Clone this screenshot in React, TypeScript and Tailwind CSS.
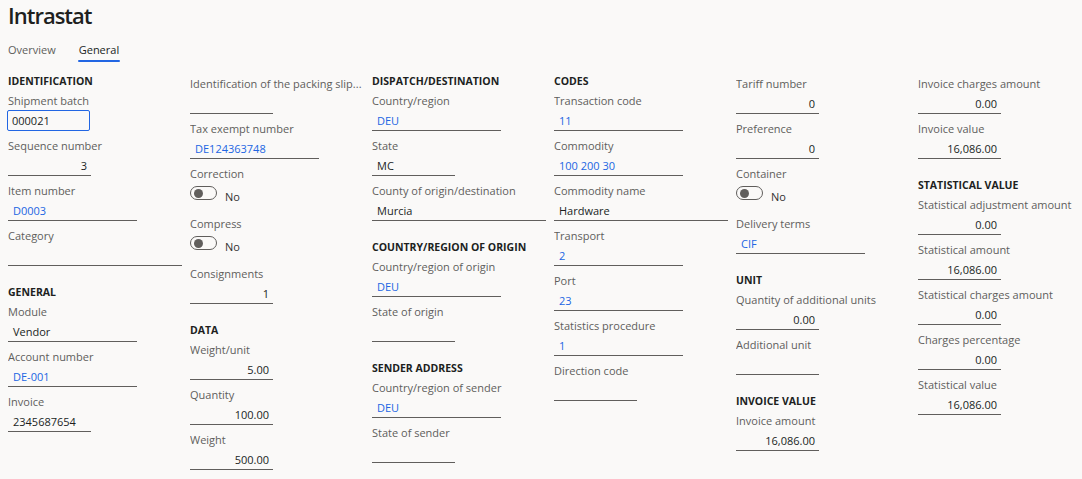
import React from "react";

type Size = "s" | "m" | "l";

type Item =
  | { kind: "header"; text: string }
  | {
      kind: "field";
      label: string;
      value?: string;
      size: Size;
      right?: boolean;
      link?: boolean;
      focused?: boolean;
    }
  | { kind: "toggle"; label: string };

const WIDTH: Record<Size, string> = {
  s: "w-[83px]",
  m: "w-[129px]",
  l: "w-[174px]",
};

const COLUMNS: { offset: boolean; items: Item[] }[] = [
  {
    offset: false,
    items: [
      { kind: "header", text: "Identification" },
      { kind: "field", label: "Shipment batch", value: "000021", size: "s", focused: true },
      { kind: "field", label: "Sequence number", value: "3", size: "s", right: true },
      { kind: "field", label: "Item number", value: "D0003", size: "m", link: true },
      { kind: "field", label: "Category", size: "l" },
      { kind: "header", text: "General" },
      { kind: "field", label: "Module", value: "Vendor", size: "m" },
      { kind: "field", label: "Account number", value: "DE-001", size: "m", link: true },
      { kind: "field", label: "Invoice", value: "2345687654", size: "s" },
    ],
  },
  {
    offset: true,
    items: [
      { kind: "field", label: "Identification of the packing slip...", size: "s" },
      { kind: "field", label: "Tax exempt number", value: "DE124363748", size: "m", link: true },
      { kind: "toggle", label: "Correction" },
      { kind: "toggle", label: "Compress" },
      { kind: "field", label: "Consignments", value: "1", size: "s", right: true },
      { kind: "header", text: "Data" },
      { kind: "field", label: "Weight/unit", value: "5.00", size: "s", right: true },
      { kind: "field", label: "Quantity", value: "100.00", size: "s", right: true },
      { kind: "field", label: "Weight", value: "500.00", size: "s", right: true },
    ],
  },
  {
    offset: false,
    items: [
      { kind: "header", text: "Dispatch/destination" },
      { kind: "field", label: "Country/region", value: "DEU", size: "m", link: true },
      { kind: "field", label: "State", value: "MC", size: "s" },
      { kind: "field", label: "County of origin/destination", value: "Murcia", size: "l" },
      { kind: "header", text: "Country/region of origin" },
      { kind: "field", label: "Country/region of origin", value: "DEU", size: "m", link: true },
      { kind: "field", label: "State of origin", size: "s" },
      { kind: "header", text: "Sender address" },
      { kind: "field", label: "Country/region of sender", value: "DEU", size: "m", link: true },
      { kind: "field", label: "State of sender", size: "s" },
    ],
  },
  {
    offset: false,
    items: [
      { kind: "header", text: "Codes" },
      { kind: "field", label: "Transaction code", value: "11", size: "m", link: true },
      { kind: "field", label: "Commodity", value: "100 200 30", size: "m", link: true },
      { kind: "field", label: "Commodity name", value: "Hardware", size: "l" },
      { kind: "field", label: "Transport", value: "2", size: "m", link: true },
      { kind: "field", label: "Port", value: "23", size: "m", link: true },
      { kind: "field", label: "Statistics procedure", value: "1", size: "m", link: true },
      { kind: "field", label: "Direction code", size: "s" },
    ],
  },
  {
    offset: true,
    items: [
      { kind: "field", label: "Tariff number", value: "0", size: "s", right: true },
      { kind: "field", label: "Preference", value: "0", size: "s", right: true },
      { kind: "toggle", label: "Container" },
      { kind: "field", label: "Delivery terms", value: "CIF", size: "m", link: true },
      { kind: "header", text: "Unit" },
      { kind: "field", label: "Quantity of additional units", value: "0.00", size: "s", right: true },
      { kind: "field", label: "Additional unit", size: "s" },
      { kind: "header", text: "Invoice value" },
      { kind: "field", label: "Invoice amount", value: "16,086.00", size: "s", right: true },
    ],
  },
  {
    offset: true,
    items: [
      { kind: "field", label: "Invoice charges amount", value: "0.00", size: "s", right: true },
      { kind: "field", label: "Invoice value", value: "16,086.00", size: "s", right: true },
      { kind: "header", text: "Statistical value" },
      { kind: "field", label: "Statistical adjustment amount", value: "0.00", size: "s", right: true },
      { kind: "field", label: "Statistical amount", value: "16,086.00", size: "s", right: true },
      { kind: "field", label: "Statistical charges amount", value: "0.00", size: "s", right: true },
      { kind: "field", label: "Charges percentage", value: "0.00", size: "s", right: true },
      { kind: "field", label: "Statistical value", value: "16,086.00", size: "s", right: true },
    ],
  },
];

function Label({ text }: { text: string }) {
  return (
    <div className="h-[20px] leading-[20px] text-[11px] text-[#605e5c] whitespace-nowrap overflow-hidden">
      {text}
    </div>
  );
}

function Field({ item }: { item: Extract<Item, { kind: "field" }> }) {
  const color = item.link ? "text-[#2266e3]" : "text-[#201f1e]";
  return (
    <div className="mb-[5px]">
      <Label text={item.label} />
      {item.focused ? (
        <div
          className={`${WIDTH[item.size]} -ml-[1px] -mt-[1px] h-[21px] border border-[#2266e3] rounded-[2px] px-[4px] leading-[19px] text-[11px] ${color}`}
        >
          {item.value}
        </div>
      ) : (
        <div
          className={`${WIDTH[item.size]} h-[20px] border-b border-[#605e5c] leading-[19px] text-[11px] ${color} ${
            item.right ? "text-right pr-[4px]" : "pl-[5px]"
          }`}
        >
          {item.value}
        </div>
      )}
    </div>
  );
}

function Toggle({ label }: { label: string }) {
  return (
    <div className="mb-[5px]">
      <Label text={label} />
      <div className="flex items-start h-[25px]">
        <div className="mt-[2px] w-[27px] h-[14px] rounded-full border border-[#605e5c] flex items-center">
          <span className="ml-[3px] w-[9px] h-[9px] rounded-full bg-[#605e5c]" />
        </div>
        <span className="ml-[8px] leading-[25px] text-[11px] text-[#323130]">No</span>
      </div>
    </div>
  );
}

function Header({ text, first }: { text: string; first: boolean }) {
  return (
    <div
      className={`h-[20px] leading-[20px] text-[10.5px] font-bold uppercase text-[#201f1e] whitespace-nowrap ${
        first ? "" : "mt-[11px]"
      }`}
    >
      {text}
    </div>
  );
}

export default function App() {
  return (
    <div
      className="w-[1082px] h-[479px] overflow-hidden bg-[#faf9f8] px-[8px]"
      style={{ fontFamily: '"Open Sans", "Noto Sans", sans-serif' }}
    >
      <h1 className="leading-[30px] text-[22px] font-semibold text-[#201f1e] tracking-[-1px]">
        Intrastat
      </h1>

      <div className="mt-[12px] flex gap-[21px] -ml-[1px]">
        {["Overview", "General"].map((tab) => (
          <div key={tab} className="flex flex-col">
            <span
              className={`px-[1px] leading-[16px] text-[11px] ${
                tab === "General" ? "text-[#201f1e]" : "text-[#605e5c]"
              }`}
            >
              {tab}
            </span>
            <span
              className={`mt-[2px] h-[2px] rounded-full ${
                tab === "General" ? "bg-[#2266e3]" : "bg-transparent"
              }`}
            />
          </div>
        ))}
      </div>

      <div className="mt-[9px] grid grid-cols-[repeat(6,182px)]">
        {COLUMNS.map((col, ci) => (
          <div key={ci} className={`flex flex-col ${col.offset ? "pt-[3px]" : ""}`}>
            {col.items.map((item, i) => {
              if (item.kind === "header") return <Header key={i} text={item.text} first={i === 0} />;
              if (item.kind === "toggle") return <Toggle key={i} label={item.label} />;
              return <Field key={i} item={item} />;
            })}
          </div>
        ))}
      </div>
    </div>
  );
}
